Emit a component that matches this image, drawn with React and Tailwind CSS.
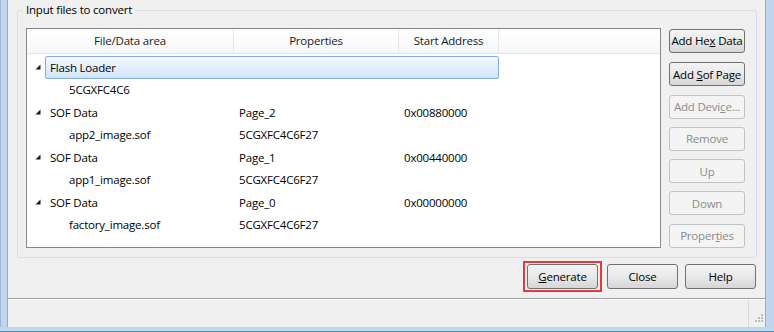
import React from "react";

const rows = [
  { level: 0, name: "Flash Loader", selected: true },
  { level: 1, name: "5CGXFC4C6" },
  { level: 0, name: "SOF Data", props: "Page_2", addr: "0x00880000" },
  { level: 1, name: "app2_image.sof", props: "5CGXFC4C6F27" },
  { level: 0, name: "SOF Data", props: "Page_1", addr: "0x00440000" },
  { level: 1, name: "app1_image.sof", props: "5CGXFC4C6F27" },
  { level: 0, name: "SOF Data", props: "Page_0", addr: "0x00000000" },
  { level: 1, name: "factory_image.sof", props: "5CGXFC4C6F27" },
];

const Expander = () => (
  <svg width="6" height="6" viewBox="0 0 6 6" className="ml-[8px]">
    <polygon points="5.5,0.5 5.5,5.5 0.5,5.5" fill="#1a1a1a" />
  </svg>
);

const Button = ({ children, disabled, className = "" }) => (
  <div
    className={
      "flex items-center justify-center rounded-[3px] border " +
      (disabled
        ? "border-[#bfc3c6] bg-[#f4f4f4] text-[#8b8b8b] "
        : "border-[#707070] bg-gradient-to-b from-[#f4f4f4] via-[#e9e9e9] to-[#d6d6d6] text-black ") +
      className
    }
  >
    {children}
  </div>
);

const TreeRow = ({ row }) => (
  <div className="flex h-[22.5px] items-center">
    <div className="w-[18px] flex items-center">
      {row.level === 0 && <Expander />}
    </div>
    <div
      className={
        "flex h-full items-center rounded-[2px] border " +
        (row.selected
          ? "border-[#84acdd] bg-gradient-to-b from-[#f2f8fe] to-[#d3e5fb]"
          : "border-transparent")
      }
    >
      <div className={"w-[188px] " + (row.level === 0 ? "pl-[4px]" : "pl-[23px]")}>
        {row.name}
      </div>
      <div className="w-[165px] pl-[5px]">{row.props}</div>
      <div className="w-[99px] pl-[5px]">{row.addr}</div>
    </div>
  </div>
);

const App = () => {
  return (
    <div className="w-[774px] h-[332px] flex flex-col bg-[#c0d5ee] font-['Open_Sans',sans-serif] text-[11.5px] text-black tracking-[-0.2px]">
      <div className="flex flex-1 min-h-0">
        <div className="w-[7px] border-l border-[#9fb6d2]" />
        <div className="flex-1 flex flex-col bg-[#f0f0f0] border-l border-r border-[#98aac2]">
          {/* dialog body */}
          <div className="h-[299px] flex flex-col border-b border-[#a0a0a0]">
            <fieldset className="ml-[9px] mr-[8px] mt-[2px] h-[256px] rounded-[3px] border border-[#d5dfe5] flex flex-col">
              <legend className="ml-[5px] px-[3px] leading-[16px]">Input files to convert</legend>
              <div className="flex pl-[8px] pt-[10px] gap-[8px]">
                {/* tree view */}
                <div className="w-[635px] h-[220px] border border-[#828790] bg-white flex flex-col">
                  <div className="flex h-[25px] border-b border-[#e3e6ea] bg-gradient-to-b from-white to-[#f6f7f9] text-[#1a1a1a]">
                    <div className="w-[207px] flex items-center justify-center border-r border-[#e3e6ea]">File/Data area</div>
                    <div className="w-[165px] flex items-center justify-center border-r border-[#e3e6ea]">Properties</div>
                    <div className="w-[100px] flex items-center justify-center border-r border-[#e3e6ea]">Start Address</div>
                    <div className="flex-1" />
                  </div>
                  <div className="pt-[2px] flex flex-col">
                    {rows.map((row, i) => (
                      <TreeRow key={i} row={row} />
                    ))}
                  </div>
                </div>
                {/* side buttons */}
                <div className="flex flex-col gap-[8.3px] pt-[1px] w-[76px]">
                  <Button className="h-[24px]">
                    <span>Add He<u>x</u> Data</span>
                  </Button>
                  <Button className="h-[24px] mt-[1px]">
                    <span>Add <u>S</u>of Page</span>
                  </Button>
                  <Button className="h-[24px]" disabled>
                    <span>Add Devi<u>c</u>e...</span>
                  </Button>
                  <Button className="h-[24px]" disabled>Remove</Button>
                  <Button className="h-[24px]" disabled>Up</Button>
                  <Button className="h-[24px]" disabled>Down</Button>
                  <Button className="h-[24px]" disabled>
                    <span>Proper<u>t</u>ies</span>
                  </Button>
                </div>
              </div>
            </fieldset>
            <div className="flex justify-end items-center mt-[3px] mr-[9px]">
              <div className="border-2 border-[#e53a3d] px-[2px] py-[1px]">
                <Button className="w-[71px] h-[25px]">
                  <span><u>G</u>enerate</span>
                </Button>
              </div>
              <Button className="w-[71px] h-[25px] ml-[5px]">Close</Button>
              <Button className="w-[71px] h-[25px] ml-[7px]">Help</Button>
            </div>
          </div>
          {/* status bar */}
          <div className="flex-1 flex border-t border-white">
            <div className="flex-1" />
            <div className="w-[17px] border-l border-[#dadada] flex items-end justify-end pb-[3px] pr-[2px]">
              <svg width="10" height="10" viewBox="0 0 10 10">
                <rect x="8" y="0" width="2" height="2" fill="#bdbdbd" />
                <rect x="5" y="3" width="2" height="2" fill="#bdbdbd" />
                <rect x="8" y="3" width="2" height="2" fill="#bdbdbd" />
                <rect x="2" y="6" width="2" height="2" fill="#bdbdbd" />
                <rect x="5" y="6" width="2" height="2" fill="#bdbdbd" />
                <rect x="8" y="6" width="2" height="2" fill="#bdbdbd" />
              </svg>
            </div>
          </div>
        </div>
        <div className="w-[8px]" />
      </div>
      <div className="h-[5px] border-b border-[#2e9cbf]" />
    </div>
  );
};

export default App;
